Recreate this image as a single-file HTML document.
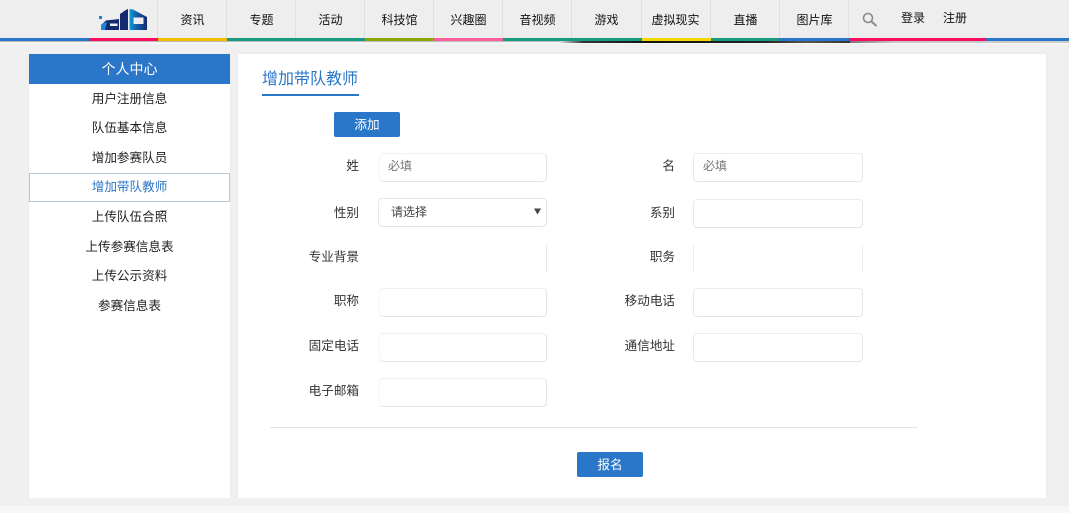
<!DOCTYPE html>
<html lang="zh">
<head>
<meta charset="utf-8">
<title>增加带队教师</title>
<style>
html,body{margin:0;padding:0;width:1069px;height:513px;overflow:hidden;background:#f0f0f0;}
body{position:relative;font-family:"Liberation Sans","Noto Sans CJK SC",sans-serif;font-size:12px;color:#222;}
div,span{position:absolute;box-sizing:border-box;}
.t{white-space:nowrap;line-height:16px;height:16px;}
.nav{top:12px;width:69px;text-align:center;color:#111;}
.dv{top:0;width:1px;height:38px;background:#dfdfdf;}
.bar{top:38px;height:3px;}
.side{left:29px;width:201px;text-align:center;color:#222;font-size:12.6px;}
.lab{width:80px;text-align:right;color:#333;font-size:12.6px;}
.in{width:168px;height:29px;background:#fff;border:1px solid #e5e5e5;border-radius:4px;border-left-color:#f6f6f6;border-top-color:#f0f0f0;}
.r{width:170px;border-left-color:#e8e8e8;border-top-color:#ececec;}
.btn{background:#2a76c8;color:#fff;text-align:center;border-radius:2px;font-size:12.6px;}
</style>
</head>
<body>
<div style="left:0;top:0;width:1069px;height:38px;background:#eeeeee"></div>
<div style="left:0;top:41px;width:1069px;height:1px;background:#bdbdbd"></div>
<div style="left:560px;top:41px;width:290px;height:2px;background:linear-gradient(90deg,#ddd 0,#333 8%,#111 30%,#222 70%,#555 85%,#333 100%)"></div>
<div style="left:850px;top:41px;width:219px;height:2px;background:linear-gradient(90deg,#777,#c8c8c8 20%,#ccc 100%)"></div>
<div style="left:0;top:43px;width:1069px;height:1px;background:#f8f8f8"></div>

<svg style="position:absolute;left:98px;top:8px" width="50" height="24" viewBox="0 0 50 24">
<defs><linearGradient id="g" x1="0" y1="0" x2="1" y2="0"><stop offset="0" stop-color="#0d9be0"/><stop offset=".4" stop-color="#1560a8"/><stop offset="1" stop-color="#14296e"/></linearGradient></defs>
<rect x="1" y="8" width="3" height="3" fill="#1d86d8"/>
<path d="M3 22V17L8 12.5L21 11V22Z" fill="#14296e"/>
<path d="M3 22V17L6 14.5H9L7 22Z" fill="#1d86d8"/>
<path d="M12 15.5H19.5V18H12Z" fill="#eee"/>
<path d="M22 22V6L27 2.5L30 1V22Z" fill="#14296e"/>
<path d="M31.5 22V1L35 1.5L49 9V22Z" fill="url(#g)"/>
<path d="M35.5 9.5H45.5V16H35.5Z" fill="#eee"/>
</svg>

<div class="dv" style="left:157px"></div><div class="dv" style="left:226px"></div><div class="dv" style="left:295px"></div><div class="dv" style="left:364px"></div><div class="dv" style="left:433px"></div><div class="dv" style="left:502px"></div><div class="dv" style="left:571px"></div><div class="dv" style="left:641px"></div><div class="dv" style="left:710px"></div><div class="dv" style="left:779px"></div><div class="dv" style="left:848px"></div>

<div class="bar" style="left:0;width:89px;background:#2a76c8"></div>
<div class="bar" style="left:89px;width:69px;background:#fb0c60"></div>
<div class="bar" style="left:158px;width:69px;background:#f1bd00"></div>
<div class="bar" style="left:227px;width:138px;background:#189a7e"></div>
<div class="bar" style="left:365px;width:69px;background:#8aa600"></div>
<div class="bar" style="left:434px;width:69px;background:#fb5f9d"></div>
<div class="bar" style="left:503px;width:139px;background:#189a7e"></div>
<div class="bar" style="left:642px;width:69px;background:#f5d800"></div>
<div class="bar" style="left:711px;width:69px;background:#189a7e"></div>
<div class="bar" style="left:780px;width:69px;background:#2a76c8"></div>
<div class="bar" style="left:849px;width:137px;background:#fb0c60"></div>
<div class="bar" style="left:986px;width:83px;background:#2a76c8"></div>

<div class="t nav" style="left:158px">资讯</div>
<div class="t nav" style="left:227px">专题</div>
<div class="t nav" style="left:296px">活动</div>
<div class="t nav" style="left:365px">科技馆</div>
<div class="t nav" style="left:434px">兴趣圈</div>
<div class="t nav" style="left:503px">音视频</div>
<div class="t nav" style="left:572px">游戏</div>
<div class="t nav" style="left:641px">虚拟现实</div>
<div class="t nav" style="left:711px">直播</div>
<div class="t nav" style="left:780px">图片库</div>
<div class="t" style="left:901px;top:10px;color:#111">登录</div>
<div class="t" style="left:943px;top:10px;color:#111">注册</div>

<svg style="position:absolute;left:862px;top:12px" width="16" height="15" viewBox="0 0 16 15">
<circle cx="6" cy="6" r="4.5" fill="none" stroke="#8a8a8a" stroke-width="1.6"/>
<path d="M9.5 9.5L14.5 14" stroke="#8a8a8a" stroke-width="2"/>
</svg>

<div style="left:28px;top:53px;width:203px;height:445px;background:#fff;border:1px solid #ebebeb;border-bottom:0"></div>
<div class="btn" style="left:29px;top:54px;width:201px;height:30px;border-radius:0;font-size:14px;line-height:30px">个人中心</div>
<div class="t side" style="top:91px">用户注册信息</div>
<div class="t side" style="top:120px">队伍基本信息</div>
<div class="t side" style="top:150px">增加参赛队员</div>
<div style="left:29px;top:173px;width:201px;height:29px;border:1px solid #b4c8de"></div>
<div class="t side" style="top:179px;color:#2a76c8">增加带队教师</div>
<div class="t side" style="top:209px">上传队伍合照</div>
<div class="t side" style="top:239px">上传参赛信息表</div>
<div class="t side" style="top:268px">上传公示资料</div>
<div class="t side" style="top:298px">参赛信息表</div>

<div style="left:237px;top:53px;width:810px;height:445px;background:#fff;border:1px solid #ebebeb;border-bottom:0"></div>
<div class="t" style="left:262px;top:70px;font-size:16px;line-height:20px;height:20px;color:#2a76c8">增加带队教师</div>
<div style="left:262px;top:94px;width:97px;height:2px;background:#2a76c8"></div>
<div class="btn" style="left:334px;top:112px;width:66px;height:25px;line-height:26px">添加</div>

<div class="t lab" style="left:279px;top:158px">姓</div>
<div class="in" style="left:379px;top:153px"></div>
<div class="t" style="left:388px;top:158px;color:#757575">必填</div>
<div class="t lab" style="left:595px;top:158px">名</div>
<div class="in r" style="left:693px;top:153px"></div>
<div class="t" style="left:703px;top:158px;color:#757575">必填</div>

<div class="t lab" style="left:279px;top:205px">性别</div>
<div class="in" style="left:378px;top:198px;width:169px;border-left-color:#e8e8e8;border-top-color:#e8e8e8"></div>
<div class="t" style="left:391px;top:204px;color:#444">请选择</div>
<svg style="position:absolute;left:534px;top:208px" width="7" height="7" viewBox="0 0 7 7"><path d="M0 0.5H7L3.5 6.5Z" fill="#444"/></svg>
<div class="t lab" style="left:595px;top:205px">系别</div>
<div class="in r" style="left:693px;top:199px"></div>

<div class="t lab" style="left:279px;top:249px">专业背景</div>
<div style="left:546px;top:245px;width:1px;height:27px;background:#e8e8e8"></div>
<div class="t lab" style="left:595px;top:249px">职务</div>
<div style="left:693px;top:245px;width:1px;height:27px;background:#ececec"></div>
<div style="left:862px;top:245px;width:1px;height:27px;background:#ececec"></div>

<div class="t lab" style="left:279px;top:293px">职称</div>
<div class="in" style="left:379px;top:288px"></div>
<div class="t lab" style="left:595px;top:293px">移动电话</div>
<div class="in r" style="left:693px;top:288px"></div>

<div class="t lab" style="left:279px;top:338px">固定电话</div>
<div class="in" style="left:379px;top:333px"></div>
<div class="t lab" style="left:595px;top:338px">通信地址</div>
<div class="in r" style="left:693px;top:333px"></div>

<div class="t lab" style="left:279px;top:383px">电子邮箱</div>
<div class="in" style="left:379px;top:378px"></div>

<div style="left:270px;top:427px;width:648px;height:1px;background:#e3e3e3"></div>
<div class="btn" style="left:577px;top:452px;width:66px;height:25px;line-height:26px">报名</div>

<div style="left:0;top:506px;width:1069px;height:7px;background:#f6f7f9"></div>
</body>
</html>
